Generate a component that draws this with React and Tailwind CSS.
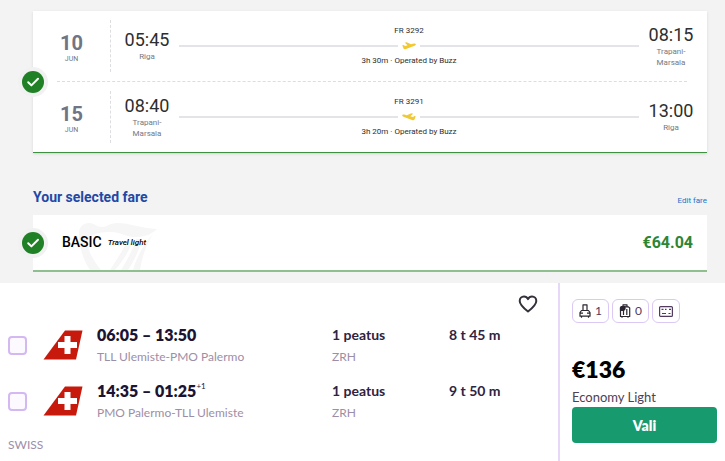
import { useState } from "react";

const flights = [
  {
    day: "10",
    month: "JUN",
    number: "FR 3292",
    info: "3h 30m · Operated by Buzz",
    from: { time: "05:45", place: "Riga" },
    to: { time: "08:15", place: "Trapani-Marsala" },
  },
  {
    day: "15",
    month: "JUN",
    number: "FR 3291",
    info: "3h 20m · Operated by Buzz",
    from: { time: "08:40", place: "Trapani-Marsala" },
    to: { time: "13:00", place: "Riga" },
    inbound: true,
  },
];

const legs = [
  {
    id: "out",
    time: "06:05 – 13:50",
    route: "TLL Ulemiste-PMO Palermo",
    stops: "1 peatus",
    via: "ZRH",
    duration: "8 t 45 m",
  },
  {
    id: "back",
    time: "14:35 – 01:25",
    nextDay: "+1",
    route: "PMO Palermo-TLL Ulemiste",
    stops: "1 peatus",
    via: "ZRH",
    duration: "9 t 50 m",
  },
];

const CheckBadge = () => (
  <span className="absolute top-1/2 left-0 -translate-x-1/2 -translate-y-1/2 rounded-full bg-[#f1f1f1] p-1">
    <svg viewBox="0 0 22 22" className="h-[22px] w-[22px]">
      <circle cx="11" cy="11" r="11" fill="#1f8025" />
      <path
        d="M6.2 11.2l3.2 3.2 6.6-6.6"
        fill="none"
        stroke="#fff"
        strokeWidth="2"
        strokeLinecap="round"
        strokeLinejoin="round"
      />
    </svg>
  </span>
);

const Plane = ({ inbound }) => (
  <svg
    viewBox="0 0 14 8"
    className={`h-2 w-3.5 ${inbound ? "-scale-x-100" : ""}`}
  >
    <path
      d="M0.3 3.3l1.200-.3 1.600.9 2.500-.6L2.800.8 4.600.3l4.500 2 2.700-.8c1-.3 1.800 0 2 .6.2.7-.3 1.300-1.200 1.600L3.400 7.200c-.8.2-1.500 0-1.900-.7z"
      fill="#f1c933"
    />
  </svg>
);

const Stop = ({ time, place }) => (
  <div className="w-12 text-center">
    <div className="text-[18px] leading-5 text-[#2e2e2e]">{time}</div>
    <div className="px-1 pt-px text-[8px] leading-[11px] text-[#75787f]">
      {place}
    </div>
  </div>
);

const FlightRow = ({ flight }) => (
  <div className="flex h-[70px] items-center">
    <div className="flex h-[52px] w-[78px] flex-col items-center justify-center border-r border-dashed border-[#dcdde0] pt-1 text-[#6f7585]">
      <div className="text-[20px] leading-5 font-bold">{flight.day}</div>
      <div className="pt-0.5 text-[7px] leading-[8px]">{flight.month}</div>
    </div>
    <div className="flex flex-1 items-center gap-2 pr-3 pl-3">
      <Stop {...flight.from} />
      <div className="flex-1 text-center text-[8px] leading-[10px] text-[#2e2e2e]">
        <div>{flight.number}</div>
        <div className="flex items-center gap-1 py-1.5">
          <span className="h-0.5 flex-1 bg-[#e3e4e8]" />
          <Plane inbound={flight.inbound} />
          <span className="h-0.5 flex-1 bg-[#e3e4e8]" />
        </div>
        <div>{flight.info}</div>
      </div>
      <Stop {...flight.to} />
    </div>
  </div>
);

const Harp = () => (
  <svg
    viewBox="0 0 80 48"
    className="absolute bottom-0 left-[46px] h-12 w-20"
    fill="#f6f6f7"
  >
    <path d="M0 9C1 4 5 1 10 1c6 0 7 4 13 4 5 0 8-4 15-4 13 0 23 5 40 6-5 5-12 8-21 8-11 0-17-6-27-5-10 0-20 3-21 9-1 10 6 20 13 29H11C4 38-1 22 0 9z" />
    <path d="M49 17c-4 10-11 20-18 31h5c8-9 14-19 18-30z" />
    <path d="M57 17c-3 11-9 21-15 31h7c6-9 11-19 14-31z" />
    <path d="M74 12c-9 10-16 22-20 36h7c2-13 6-25 13-36z" />
  </svg>
);

const SwissTail = () => (
  <svg viewBox="0 0 40 30" className="h-[30px] w-10">
    <path d="M22 .5h17.5L33 29.500H.5z" fill="#c71a0c" />
    <path
      d="M21.500 6h6v6H34v6h-6.500v6h-6v-6H15v-6h6.500z"
      fill="#fff"
    />
  </svg>
);

const CabinBag = () => (
  <svg
    viewBox="0 0 12 14"
    className="h-3.5 w-3"
    fill="none"
    stroke="#2b2630"
    strokeWidth="1.2"
    strokeLinejoin="round"
  >
    <path d="M4 6.500V.8h4v5.700M2.500 6.500h7l1.500 2v3.700H1V8.500zM1 9.200h3M8 9.200h3M2.500 12.200v1.600M9.500 12.200v1.600" />
  </svg>
);

const Suitcase = () => (
  <svg
    viewBox="0 0 12 14"
    className="h-3.5 w-3"
    fill="none"
    stroke="#2b2630"
    strokeWidth="1.2"
    strokeLinejoin="round"
  >
    <path d="M4 3V.8h4V3M2.500 2.800h7l1.200 1.200v8.500H1.500V4zM4.500 6v5M7.800 5v6M3 12.500v1.300M9 12.500v1.300" />
    <path d="M1.500 3.500l1-1h3.500v2.500l-1.500 1.500H1.500z" fill="#2b2630" />
  </svg>
);

const Card = () => (
  <svg
    viewBox="0 0 14 11"
    className="h-[11px] w-3.5"
    fill="none"
    stroke="#51395f"
    strokeWidth="1.2"
  >
    <rect x=".6" y=".6" width="12.8" height="9.800" rx="1" />
    <path d="M2.500 3.300h2M6 3.300h1.500M10 3.300h2M3 7.500h4M9.500 7.500h2" />
  </svg>
);

const Chip = ({ children }) => (
  <span className="flex h-6 items-center gap-1 rounded-md border border-[#dcc8f5] px-1.5 text-[12px] text-[#51395f]">
    {children}
  </span>
);

const LegRow = ({ leg, checked, onChange }) => (
  <div className="flex h-14 items-center">
    <input
      id={leg.id}
      type="checkbox"
      checked={checked}
      onChange={onChange}
      className="size-[19px] shrink-0 appearance-none rounded border-2 border-[#d3b8f2] bg-[#fcfaff] checked:bg-[#d3b8f2]"
    />
    <label htmlFor={leg.id} className="flex flex-1 items-center pl-4">
      <SwissTail />
      <span className="w-[235px] pl-3.5">
        <span className="block text-[16px] leading-6 font-extrabold text-[#1c1433]">
          {leg.time}
          {leg.nextDay && (
            <sup className="-top-2 text-[8px] font-normal">{leg.nextDay}</sup>
          )}
        </span>
        <span className="block text-[12px] leading-5 text-[#9d8ea6]">
          {leg.route}
        </span>
      </span>
      <span className="w-[117px] pl-3.5">
        <span className="block text-[14px] leading-6 font-bold text-[#2f2342]">
          {leg.stops}
        </span>
        <span className="block text-[12px] leading-5 text-[#9d8ea6]">
          {leg.via}
        </span>
      </span>
      <span className="self-start pl-3.5 text-[14px] leading-6 font-bold text-[#2f2342]">
        {leg.duration}
      </span>
    </label>
  </div>
);

const RyanairSummary = () => (
  <section className="bg-[#f3f3f3] pt-[11px] pr-[18px] pb-[11px] pl-[33px] font-['Roboto',sans-serif]">
    <div className="relative border-b border-[#3f9142] bg-white shadow-sm">
      <FlightRow flight={flights[0]} />
      <hr className="mr-5 ml-6 border-dashed border-[#dcdde0]" />
      <FlightRow flight={flights[1]} />
      <CheckBadge />
    </div>

    <div className="flex items-end justify-between pt-8 pb-1.5">
      <h2 className="text-[14px] leading-6 font-bold text-[#2248a5]">
        Your selected fare
      </h2>
      <a href="#fare" className="pb-0.5 text-[8px] leading-3 text-[#2272c9]">
        Edit fare
      </a>
    </div>

    <div className="relative flex h-[57px] items-center border-b-2 border-[#8fbf8f] bg-white pr-3.5 pl-[29px]">
      <Harp />
      <CheckBadge />
      <span className="relative text-[14px] font-medium text-black">BASIC</span>
      <span className="relative pl-1.5 text-[8px] font-medium text-black italic">
        Travel light
      </span>
      <span className="ml-auto text-[16px] font-bold text-[#2f8532]">
        €64.04
      </span>
    </div>
  </section>
);

const SwissOffer = () => {
  const [selected, setSelected] = useState([]);
  const toggle = (id) =>
    setSelected((prev) =>
      prev.includes(id) ? prev.filter((x) => x !== id) : [...prev, id]
    );

  return (
    <section className="flex flex-1 bg-white font-['Lato',sans-serif]">
      <div className="flex-1 pl-2">
        <div className="flex justify-end pt-3 pr-5 pb-1">
          <button type="button" aria-label="Favorite">
            <svg
              viewBox="0 0 20 18"
              className="h-[18px] w-5"
              fill="none"
              stroke="#35303a"
              strokeWidth="2"
              strokeLinejoin="round"
            >
              <path d="M10 16.500C5 12.500 1.700 9.500 1.700 5.900 1.700 3.300 3.600 1.500 6 1.500c1.700 0 3.200 1 4 2.600.8-1.600 2.300-2.600 4-2.600 2.400 0 4.300 1.800 4.300 4.400 0 3.600-3.300 6.600-8.300 10.600z" />
            </svg>
          </button>
        </div>
        {legs.map((leg) => (
          <LegRow
            key={leg.id}
            leg={leg}
            checked={selected.includes(leg.id)}
            onChange={() => toggle(leg.id)}
          />
        ))}
        <div className="pt-1.5 text-[12px] leading-5 text-[#9d8ea6]">SWISS</div>
      </div>

      <aside className="w-[167px] border-l-2 border-[#e6d8f8] pt-4 pr-2 pl-3">
        <div className="flex gap-[3px]">
          <Chip>
            <CabinBag />1
          </Chip>
          <Chip>
            <Suitcase />0
          </Chip>
          <Chip>
            <Card />
          </Chip>
        </div>
        <div className="pt-8 text-[23px] leading-7 font-extrabold text-black">
          €136
        </div>
        <div className="pt-1 text-[13px] leading-5 text-[#4d4157]">
          Economy Light
        </div>
        <button
          type="button"
          className="h-9 w-full rounded bg-[#179a6d] text-[14px] font-extrabold text-white"
        >
          Vali
        </button>
      </aside>
    </section>
  );
};

export default function App() {
  return (
    <main className="flex min-h-screen flex-col">
      <RyanairSummary />
      <SwissOffer />
    </main>
  );
}
